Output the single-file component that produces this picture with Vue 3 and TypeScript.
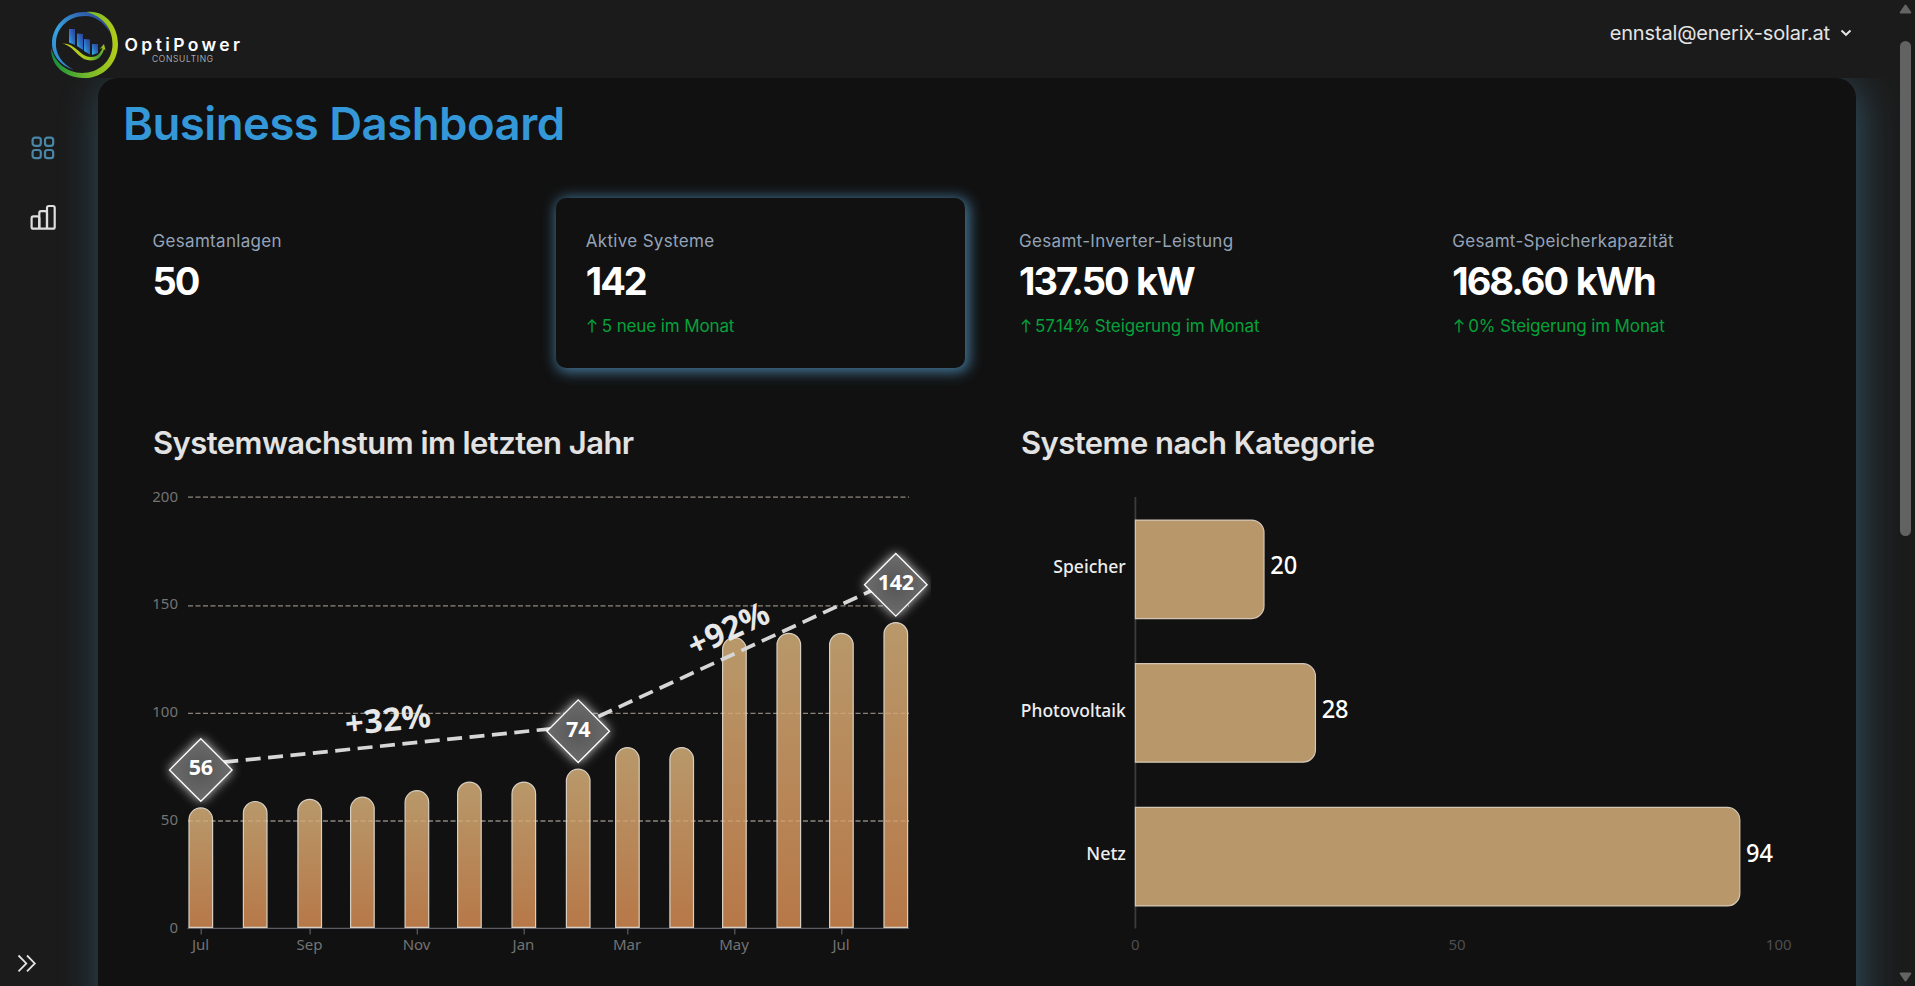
<script setup lang="ts">
interface Stat {
  label: string
  value: string
  trend?: string
  active?: boolean
}

const stats: Stat[] = [
  { label: 'Gesamtanlagen', value: '50' },
  { label: 'Aktive Systeme', value: '142', trend: '5 neue im Monat', active: true },
  { label: 'Gesamt-Inverter-Leistung', value: '137.50 kW', trend: '57.14% Steigerung im Monat' },
  { label: 'Gesamt-Speicherkapazität', value: '168.60 kWh', trend: '0% Steigerung im Monat' },
]

// Growth chart: plot area in chart-local units
const baseY = 448.2
const unit = 2.156
const barW = 23.6
const growth = [
  { x: 47.8, v: 56, month: 'Jul' },
  { x: 102.2, v: 59 },
  { x: 156.7, v: 60, month: 'Sep' },
  { x: 209.4, v: 61 },
  { x: 263.9, v: 64, month: 'Nov' },
  { x: 316.4, v: 68 },
  { x: 370.8, v: 68, month: 'Jan' },
  { x: 425.2, v: 74 },
  { x: 474.4, v: 84, month: 'Mar' },
  { x: 528.7, v: 84 },
  { x: 581.4, v: 135, month: 'May' },
  { x: 635.8, v: 137 },
  { x: 688.4, v: 137, month: 'Jul' },
  { x: 742.8, v: 142 },
]
const gridLines = [
  { v: 200, y: 17.2, ty: 21.8 },
  { v: 150, y: 125.8, ty: 128.8 },
  { v: 100, y: 233.3, ty: 236.8 },
  { v: 50, y: 341, ty: 344.8 },
]
const markers = [
  { x: 47.8, y: 290, v: 56 },
  { x: 425.2, y: 251.2, v: 74 },
  { x: 742.8, y: 104.8, v: 142 },
]

const barPath = (x: number, v: number): string => {
  const r = barW / 2
  const top = baseY - v * unit + 0.5
  return `M${x - r} ${baseY - 0.8}V${top + r}A${r} ${r} 0 0 1 ${x + r} ${top + r}V${baseY - 0.8}Z`
}

// Category chart
const axisX = 114.4
const categories = [
  { name: 'Speicher', v: 20, y: 40.1, len: 72.5 },
  { name: 'Photovoltaik', v: 28, y: 183.7, len: 105 },
  { name: 'Netz', v: 94, y: 327.4, len: 39.5 },
]
const catPath = (y: number, v: number): string => {
  const right = axisX + v * 6.43
  const h = 98.5
  const r = 12.5
  return `M${axisX} ${y}H${right - r}A${r} ${r} 0 0 1 ${right} ${y + r}V${y + h - r}A${r} ${r} 0 0 1 ${right - r} ${y + h}H${axisX}Z`
}
</script>

<template>
  <div class="app">
    <header class="topbar">
      <svg class="logo" width="200" height="70" viewBox="48 9 200 70">
        <defs>
          <linearGradient id="ringBlue" x1="0" y1="1" x2="1" y2="0">
            <stop offset="0" stop-color="#2f7fd0" /><stop offset=".4" stop-color="#35a3de" /><stop offset="1" stop-color="#2b3590" />
          </linearGradient>
          <linearGradient id="ringGreen" x1="0" y1="0" x2="1" y2="0">
            <stop offset="0" stop-color="#0f8f3c" /><stop offset=".5" stop-color="#6db52c" /><stop offset="1" stop-color="#b5cc18" />
          </linearGradient>
          <linearGradient id="swoosh" x1="0" y1="0" x2="1" y2="0">
            <stop offset="0" stop-color="#c3cf1c" /><stop offset=".6" stop-color="#a5c81f" /><stop offset=".85" stop-color="#3f9d35" /><stop offset="1" stop-color="#c3cf1c" />
          </linearGradient>
          <linearGradient id="logoBar" x1="0" y1="1" x2="1" y2="0">
            <stop offset=".2" stop-color="#2f9be0" /><stop offset=".5" stop-color="#2c6cc0" /><stop offset="1" stop-color="#2c3f98" />
          </linearGradient>
        </defs>
        <path d="M74 70C59 65 51 54 52 41C54 24 67 12 84 12C96 12 106 20 110 33C104 22 95 16 85 16C69 16 57 27 56 42C55 54 62 64 74 70Z" fill="url(#ringBlue)" />
        <path d="M86 12C104 9 118 25 118 44C118 64 102 79 83 78C64 77 51 66 51 48C55 63 67 72.500 82 73C99 73 112 61 112.500 45C113 29 103 16 86 12Z" fill="url(#ringGreen)" />
        <path d="M69 29H75V45L69 42.500Z" fill="url(#logoBar)" />
        <path d="M77 33.500L83 34V50L77 46Z" fill="url(#logoBar)" />
        <path d="M84 39L90 39.500V54.500L84 51Z" fill="url(#logoBar)" />
        <path d="M92 44H98V53L92 55Z" fill="url(#logoBar)" />
        <path d="M62 43.500C76 43 80 57 91 57C98 57 101 52 102.500 48L99.500 49L104 44L105.500 50.500L104 49C102 56 98 60.500 91 60.500C78 60.500 75 46 62 43.500Z" fill="url(#swoosh)" />
        <text x="124.500" y="51" class="brand" textLength="115.500" lengthAdjust="spacing">OptiPower</text>
        <text x="152" y="62" class="brand-sub" textLength="61" lengthAdjust="spacing">CONSULTING</text>
      </svg>
      <div class="account">
        <span>ennstal@enerix-solar.at</span>
        <svg width="12" height="8" viewBox="0 0 12 8"><path d="M1.500 1.500L6 5.800L10.500 1.500" fill="none" stroke="#e4e4e4" stroke-width="2" /></svg>
      </div>
    </header>

    <div class="body">
      <nav class="sidebar">
        <svg class="nav-icon" width="26" height="26" viewBox="0 0 26 26" fill="none" stroke="#4986a7" stroke-width="2.200">
          <rect x="2.600" y="2.600" width="8.200" height="8.200" rx="2.500" /><rect x="15" y="2.600" width="8.200" height="8.200" rx="2.500" />
          <rect x="2.600" y="15" width="8.200" height="8.200" rx="2.500" /><rect x="15" y="15" width="8.200" height="8.200" rx="2.500" />
        </svg>
        <svg class="nav-icon" width="28" height="28" viewBox="0 0 28 28" fill="none" stroke="#dedede" stroke-width="2.200">
          <rect x="1.600" y="12.400" width="7.700" height="12.300" rx="1.800" /><rect x="9.300" y="7.200" width="7.700" height="17.500" rx="1.800" />
          <rect x="17" y="2" width="7.700" height="22.700" rx="1.800" />
        </svg>
        <svg class="expand" width="20" height="20" viewBox="0 0 20 20" fill="none" stroke="#e2e2e2" stroke-width="1.800">
          <path d="M1.500 1.500L9.300 9.400L1.500 17.300M10 1.500L17.800 9.400L10 17.300" />
        </svg>
      </nav>

      <main class="panel">
        <h1>Business Dashboard</h1>
        <section class="stats">
          <article v-for="s in stats" :key="s.label" class="stat" :class="{ active: s.active }">
            <p class="stat-label">{{ s.label }}</p>
            <p class="stat-value">{{ s.value }}</p>
            <p v-if="s.trend" class="stat-trend">
              <svg width="10" height="14" viewBox="0 0 10 14" fill="none" stroke="#05a23b" stroke-width="1.400"><path d="M5 13.500V1.300M.8 5.200L5 1L9.200 5.200" /></svg>
              <span>{{ s.trend }}</span>
            </p>
          </article>
        </section>

        <section class="charts">
          <div class="chart growth">
            <h2>Systemwachstum im letzten Jahr</h2>
            <svg width="778" height="490" viewBox="0 0 778 490">
              <defs>
                <linearGradient id="barFill" x1="0" y1="0" x2="0" y2="1">
                  <stop offset="0" stop-color="#b8986a" /><stop offset="1" stop-color="#b77848" />
                </linearGradient>
                <radialGradient id="markerFill">
                  <stop offset="0" stop-color="#565656" /><stop offset="1" stop-color="#6c6c6c" />
                </radialGradient>
                <filter id="glow" x="-50%" y="-50%" width="200%" height="200%">
                  <feGaussianBlur stdDeviation="5.500" />
                </filter>
              </defs>
              <g v-for="g in gridLines" :key="g.v">
                <line x1="35" x2="756" :y1="g.y" :y2="g.y" class="grid-line" />
                <text x="25" :y="g.ty" class="tick" text-anchor="end">{{ g.v }}</text>
              </g>
              <text x="25" y="452.500" class="tick" text-anchor="end">0</text>
              <path d="M34.500 448.400H756" stroke="#5b5c62" stroke-width="1.300" />
              <g v-for="(b, i) in growth" :key="i">
                <path :d="barPath(b.x, b.v)" fill="url(#barFill)" stroke="#d8cfc4" stroke-width="1.200" />
                <template v-if="b.month">
                  <path :d="`M${b.x + 0.4} 449v5.600`" stroke="#5b5c62" stroke-width="1.200" />
                  <text :x="b.x - 0.3" y="469.800" class="tick" text-anchor="middle">{{ b.month }}</text>
                </template>
              </g>
              <line v-for="g in gridLines" :key="'o' + g.v" x1="35" x2="756" :y1="g.y" :y2="g.y" class="grid-line over" />
              <path d="M70.300 282.200L398 248.800" class="trend-line" />
              <path d="M445.300 236.500L718.700 110.500" class="trend-line" />
              <text transform="translate(235 239.800) rotate(-5.800)" y="11.400" class="growth-rate" text-anchor="middle">+32%</text>
              <text transform="translate(575.500 149) rotate(-24.700)" y="11.400" class="growth-rate" text-anchor="middle">+92%</text>
              <g v-for="m in markers" :key="m.v" :transform="`translate(${m.x} ${m.y})`">
                <path d="M0 -32L32 0L0 32L-32 0Z" fill="#ffffff" opacity=".8" filter="url(#glow)" />
                <path d="M0 -31.300L31.300 0L0 31.300L-31.300 0Z" fill="url(#markerFill)" stroke="#ffffff" stroke-width="1.300" />
                <text x="0" y="5.400" class="marker-value" text-anchor="middle">{{ m.v }}</text>
              </g>
            </svg>
          </div>

          <div class="chart category">
            <h2>Systeme nach Kategorie</h2>
            <svg width="780" height="490" viewBox="0 0 780 490">
              <path :d="`M${axisX} 17V448.500`" stroke="#3c3c3e" stroke-width="1.800" />
              <g v-for="c in categories" :key="c.name">
                <path :d="catPath(c.y, c.v)" fill="#b8986a" stroke="#d3c6b6" stroke-width="1.200" />
                <text :x="104.800 - c.len" :y="c.y + 52.900" class="cat-name" :textLength="c.len" lengthAdjust="spacingAndGlyphs">{{ c.name }}</text>
                <text :x="axisX + c.v * 6.430 + 6.200" :y="c.y + 54.200" class="cat-value" textLength="27" lengthAdjust="spacingAndGlyphs">{{ c.v }}</text>
              </g>
              <text x="114.400" y="469.800" class="tick dim" text-anchor="middle">0</text>
              <text x="436" y="469.800" class="tick dim" text-anchor="middle">50</text>
              <text x="757.700" y="469.800" class="tick dim" text-anchor="middle">100</text>
            </svg>
          </div>
        </section>
      </main>
    </div>

    <div class="scrollbar">
      <svg width="13" height="10" viewBox="0 0 13 10"><path d="M6.500 1.500L11.300 8.500H1.700Z" fill="#646464" stroke="#646464" stroke-width="2" stroke-linejoin="round" /></svg>
      <div class="thumb"></div>
      <svg class="down" width="13" height="10" viewBox="0 0 13 10"><path d="M6.500 8.500L11.300 1.500H1.700Z" fill="#646464" stroke="#646464" stroke-width="2" stroke-linejoin="round" /></svg>
    </div>
  </div>
</template>

<style>
body {
  background: #1b1b1b;
  overflow: hidden;
}
</style>

<style scoped>
.app {
  position: relative;
  width: 1915px;
  height: 986px;
  overflow: hidden;
  background: #1b1b1b;
  font-family: Inter, "Noto Sans", sans-serif;
  display: flex;
  flex-direction: column;
}
.topbar {
  height: 78px;
  flex: none;
  display: flex;
  justify-content: space-between;
  box-sizing: border-box;
  padding: 9px 63px 0 48px;
}
.logo {
  position: relative;
  z-index: 2;
}
.brand {
  font: 600 17.500px Inter, sans-serif;
  fill: #ffffff;
}
.brand-sub {
  font: 300 8.400px Inter, sans-serif;
  fill: #d0d0d0;
}
.account {
  display: flex;
  align-items: center;
  gap: 10px;
  height: 48px;
  font-size: 20px;
  letter-spacing: -0.150px;
  color: #e4e4e4;
}
.body {
  flex: 1;
  display: flex;
  overflow: hidden;
}
.sidebar {
  width: 98px;
  flex: none;
  box-sizing: border-box;
  padding: 57px 0 12px 30px;
  display: flex;
  flex-direction: column;
  align-items: flex-start;
}
.nav-icon + .nav-icon {
  margin-top: 43px;
}
.expand {
  margin: auto 0 0 -13px;
}
.panel {
  width: 1758px;
  height: 1300px;
  flex: none;
  box-sizing: border-box;
  padding: 0 25px;
  background: #111111;
  border-radius: 20px;
  box-shadow: 4px 6px 40px rgba(77, 148, 185, 0.45);
}
h1,
h2,
p {
  margin: 0;
}
h1 {
  padding-top: 16px;
  height: 104px;
  font-size: 45.500px;
  line-height: 60px;
  font-weight: 600;
  letter-spacing: -0.520px;
  color: #3498d8;
}
.stats {
  display: grid;
  grid-template-columns: repeat(4, 1fr);
  gap: 25px;
}
.stat {
  height: 170px;
  box-sizing: border-box;
  padding: 30px 29.500px;
  border-radius: 10px;
}
.stat.active {
  box-shadow: 2px 2px 14px 2px rgba(77, 140, 180, 0.85);
  background: #111111;
}
.stat-label {
  font-size: 17px;
  line-height: 26px;
  letter-spacing: 0.320px;
  color: #94a3b8;
}
.stat-value {
  margin-top: 5px;
  font-size: 38px;
  line-height: 44px;
  font-weight: 700;
  letter-spacing: -2px;
  word-spacing: 1.500px;
  color: #ffffff;
}
.stat-trend {
  display: flex;
  align-items: center;
  gap: 4.500px;
  margin: 10px 0 0 1.500px;
  font-size: 17px;
  line-height: 26px;
  letter-spacing: -0.120px;
  color: #05a23b;
}
.charts {
  display: grid;
  grid-template-columns: 868px 1fr;
  margin-top: 50px;
}
.chart {
  padding-left: 30px;
}
.chart h2 {
  height: 62px;
  font-size: 31px;
  line-height: 50px;
  font-weight: 600;
  letter-spacing: -0.560px;
  color: #e2e2e2;
}
.chart svg {
  display: block;
}
.tick {
  font: 15px "Noto Sans", sans-serif;
  fill: #737373;
}
.tick.dim {
  fill: #4d4d50;
}
.grid-line {
  stroke: #666666;
  stroke-width: 1.300;
  stroke-dasharray: 5 2.500;
}
.grid-line.over {
  opacity: 0.220;
  stroke: #ffe8c0;
}
.trend-line {
  fill: none;
  stroke: #d6d6d6;
  stroke-width: 3.700;
  stroke-dasharray: 15 7.500;
}
.growth-rate {
  font: 700 32.500px "Noto Sans", sans-serif;
  letter-spacing: 0.300px;
  fill: #e8e8e8;
}
.marker-value {
  font: 700 21.500px "Noto Sans", sans-serif;
  letter-spacing: -0.200px;
  fill: #ffffff;
}
.cat-name {
  font: 500 18px "Noto Sans", sans-serif;
  fill: #eeeeee;
}
.cat-value {
  font: 500 24.500px "Noto Sans", sans-serif;
  fill: #ffffff;
}
.scrollbar {
  position: absolute;
  top: 0;
  right: 0;
  width: 19px;
  height: 986px;
  display: flex;
  flex-direction: column;
  align-items: center;
  box-sizing: border-box;
  padding: 4px 0;
}
.thumb {
  width: 11px;
  height: 495px;
  margin-top: 27px;
  border-radius: 6px;
  background: #626262;
}
.down {
  margin-top: auto;
}
</style>
